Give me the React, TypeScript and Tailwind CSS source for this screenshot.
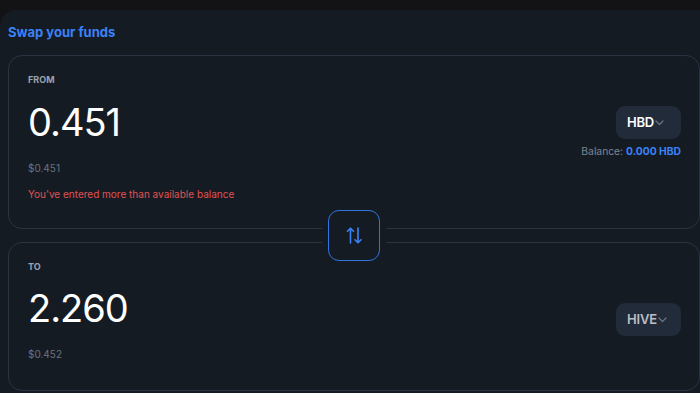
import React from "react";

function Chevron() {
  return (
    <svg width="9" height="6" viewBox="0 0 9 6" fill="none" className="ml-[1px] mt-[1px]">
      <path d="M1 1l3.5 3.5L8 1" stroke="#6b7280" strokeWidth="1.2" strokeLinecap="round" strokeLinejoin="round" />
    </svg>
  );
}

function SwapIcon() {
  return (
    <svg width="16" height="17" viewBox="0 0 16 17" fill="none">
      <path d="M4.5 16V1.2M1.5 4.2L4.5 1.2l3 3" stroke="#3b82f6" strokeWidth="1.6" strokeLinecap="round" strokeLinejoin="round" />
      <path d="M12 1v14.8M9 12.8l3 3 3-3" stroke="#3b82f6" strokeWidth="1.6" strokeLinecap="round" strokeLinejoin="round" />
    </svg>
  );
}

function TokenButton({ label, dim }: { label: string; dim?: boolean }) {
  return (
    <button className="flex h-[33px] w-[65px] items-center rounded-[9px] bg-[#222b39] pl-[11px]">
      <span className={`text-[13px] font-semibold tracking-[-0.2px] ${dim ? "text-[#b9bec6]" : "text-white"}`}>{label}</span>
      <Chevron />
    </button>
  );
}

export default function App() {
  return (
    <div className="h-[393px] w-[700px] overflow-hidden bg-[#131214] pt-[10px]" style={{ fontFamily: "Inter, 'Liberation Sans', sans-serif" }}>
      <div className="h-[383px] rounded-tl-[16px] bg-[#151b23] pl-[8px]">
        <div className="pt-[14px] text-[13px] font-bold leading-[16px] text-[#3b82f6]">Swap your funds</div>
        <div className="relative mt-[15px]">
          {/* FROM card */}
          <div className="flex h-[174px] justify-between rounded-[14px] border border-[#2a3342]">
            <div className="pl-[19px] pt-[17px]">
              <div className="text-[9px] font-bold leading-[14px] text-[#9ca3af]">FROM</div>
              <div className="mt-[11px] text-[38px] leading-[48px] tracking-[-1px] text-white">0.451</div>
              <div className="mt-[15px] text-[10px] leading-[14px] text-[#6b7280]">$0.451</div>
              <div className="mt-[12px] text-[10px] leading-[14px] text-[#e05252]">You've entered more than available balance</div>
            </div>
            <div className="flex flex-col items-end pr-[18px] pt-[50px]">
              <TokenButton label="HBD" />
              <div className="mt-[5px] text-[10.3px] leading-[14px] text-[#7d8590]">
                Balance: <span className="font-bold text-[#3b82f6]">0.000 HBD</span>
              </div>
            </div>
          </div>
          {/* swap button */}
          <div className="absolute left-1/2 top-[155px] z-10 -translate-x-1/2">
            <button className="flex h-[51px] w-[52px] items-center justify-center rounded-[11px] border border-[#2f74e0] bg-[#151b23] shadow-[0_0_0_6px_#151b23]">
              <SwapIcon />
            </button>
          </div>
          {/* TO card */}
          <div className="mt-[13px] flex h-[149px] justify-between rounded-[14px] border border-[#2a3342]">
            <div className="pl-[19px] pt-[17px]">
              <div className="text-[9px] font-bold leading-[14px] text-[#9ca3af]">TO</div>
              <div className="mt-[10px] text-[38px] leading-[48px] tracking-[-1px] text-white">2.260</div>
              <div className="mt-[15px] text-[10px] leading-[14px] text-[#6b7280]">$0.452</div>
            </div>
            <div className="flex flex-col items-end pr-[18px] pt-[60px]">
              <TokenButton label="HIVE" dim />
            </div>
          </div>
        </div>
      </div>
    </div>
  );
}
